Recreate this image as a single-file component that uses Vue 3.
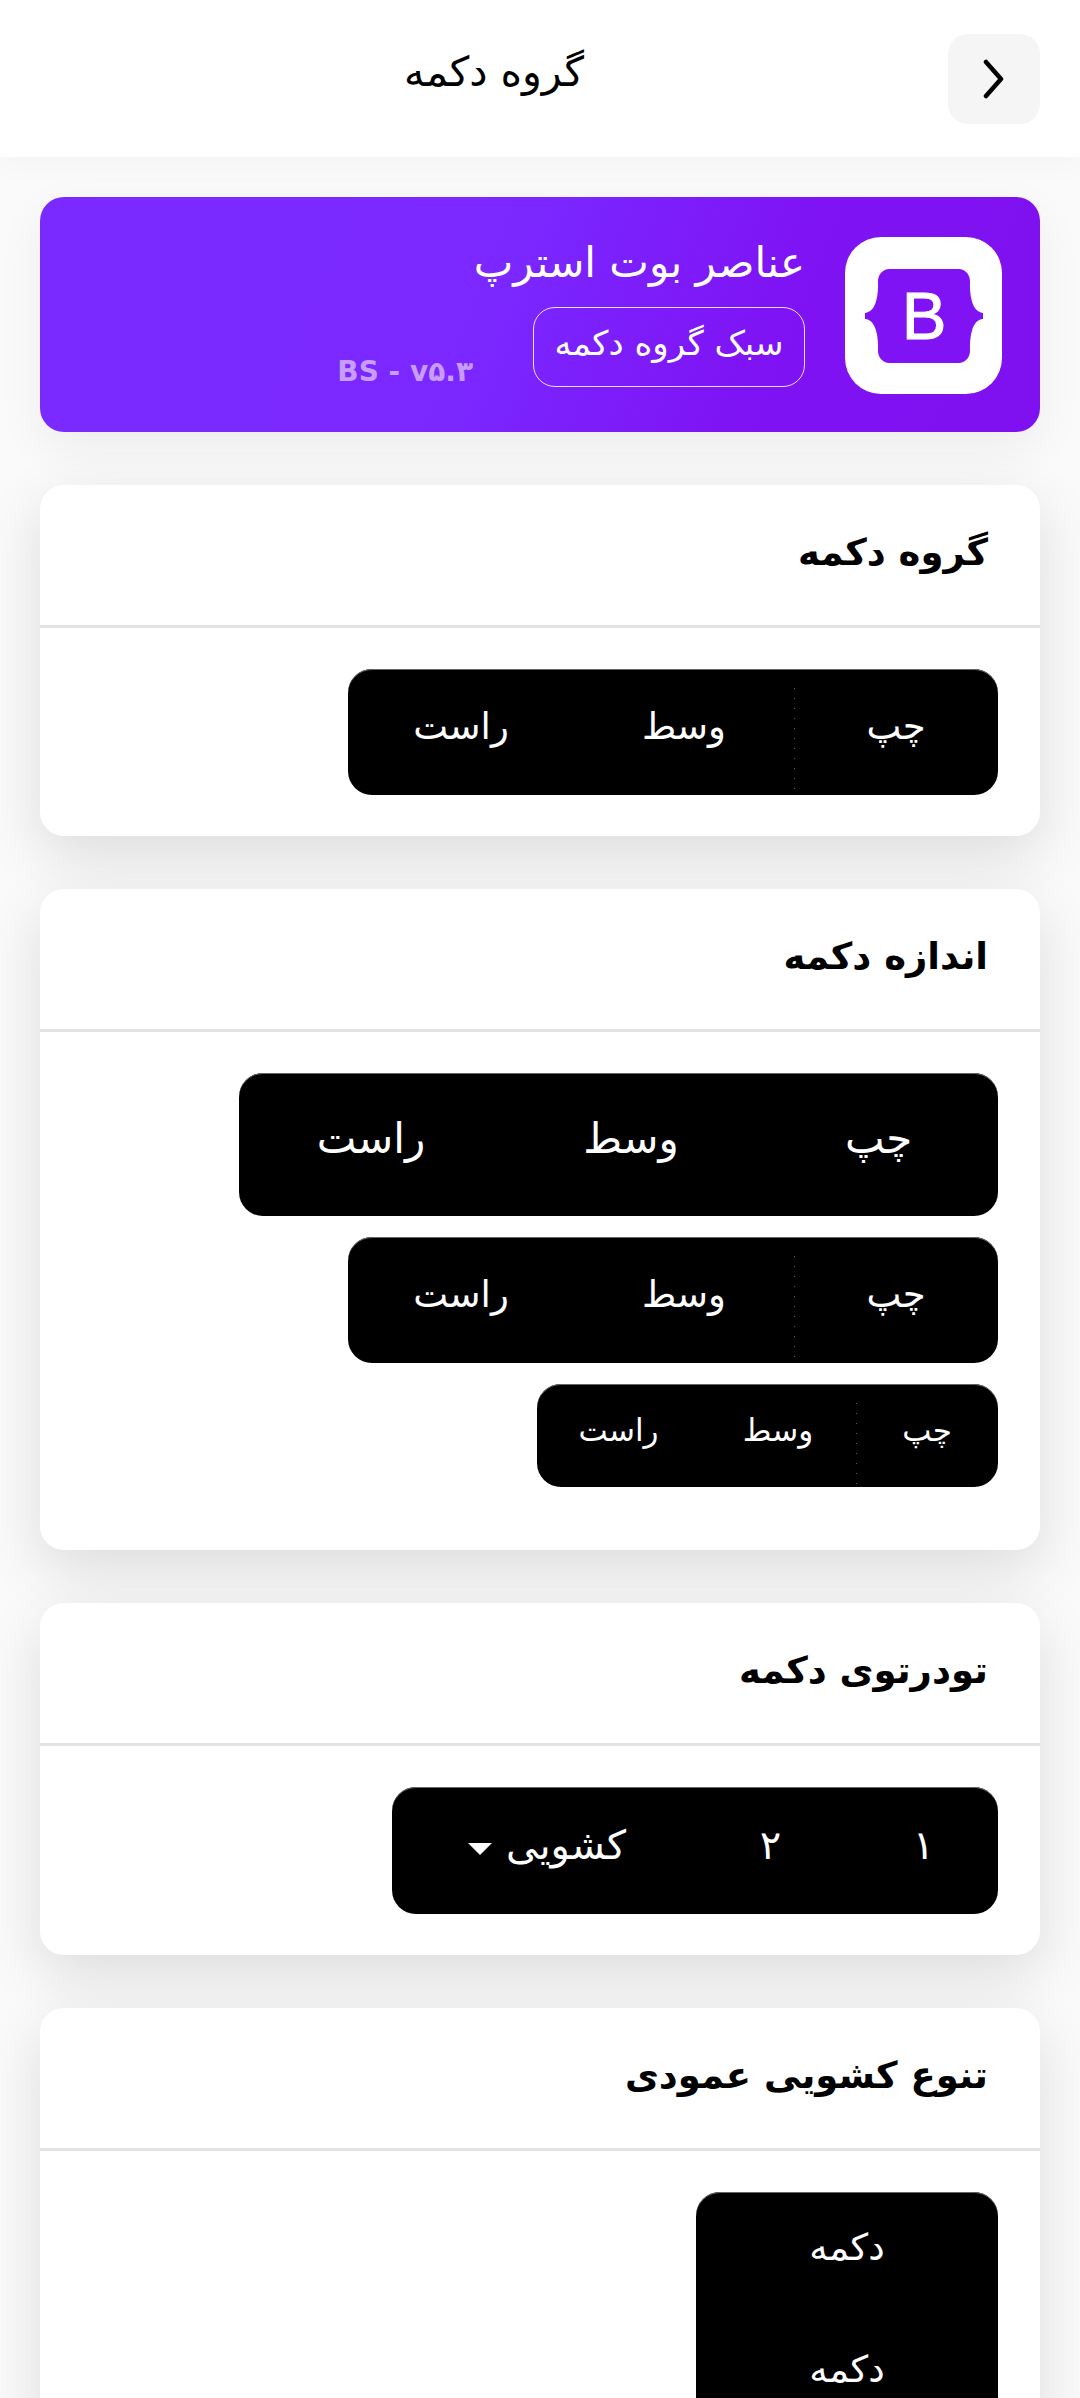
<template>
  <div class="page" dir="rtl">
    <!-- Header -->
    <header class="topbar">
      <button class="back-btn" aria-label="بازگشت">
        <svg width="24" height="40" viewBox="0 0 24 40" fill="none" stroke="#000" stroke-width="4.5" stroke-linecap="round" stroke-linejoin="round">
          <path d="M4 3l15 17L4 37"></path>
        </svg>
      </button>
      <h1 class="topbar-title">گروه دکمه</h1>
      <span></span>
    </header>

    <main class="content">
      <!-- Banner -->
      <section class="banner">
        <div class="banner-logo">
          <svg width="118" height="94" viewBox="0 0 118 94">
            <path fill="#7f13f3" d="M24.509 0c-6.733 0-11.715 5.893-11.492 12.284.214 6.14-.064 14.092-2.066 20.577C8.943 39.365 5.547 43.485 0 44.014v5.972c5.547.529 8.943 4.649 10.951 11.153 2.002 6.485 2.28 14.437 2.066 20.577C12.794 88.106 17.776 94 24.51 94H93.5c6.733 0 11.714-5.893 11.491-12.284-.214-6.14.064-14.092 2.066-20.577 2.009-6.504 5.396-10.624 10.943-11.153v-5.972c-5.547-.529-8.934-4.649-10.943-11.153-2.002-6.484-2.28-14.437-2.066-20.577C105.214 5.893 100.233 0 93.5 0H24.508z"></path>
            <text x="59" y="70" text-anchor="middle" class="logo-letter">B</text>
          </svg>
        </div>
        <div class="banner-text">
          <h2 class="banner-title">عناصر بوت استرپ</h2>
          <div class="banner-row">
            <span class="banner-chip">سبک گروه دکمه</span>
            <span class="banner-version">BS - v۵.۳</span>
          </div>
        </div>
      </section>

      <!-- Button group -->
      <section class="card">
        <h3 class="card-title">گروه دکمه</h3>
        <div class="card-body">
          <div class="btn-group md">
            <button v-for="label in labels" :key="label" class="btn">{{ label }}</button>
          </div>
        </div>
      </section>

      <!-- Button size -->
      <section class="card">
        <h3 class="card-title">اندازه دکمه</h3>
        <div class="card-body sizes">
          <div v-for="size in sizes" :key="size" class="btn-group" :class="size">
            <button v-for="label in labels" :key="label" class="btn">{{ label }}</button>
          </div>
        </div>
      </section>

      <!-- Nested -->
      <section class="card">
        <h3 class="card-title">تودرتوی دکمه</h3>
        <div class="card-body">
          <div class="btn-group nested">
            <button class="btn">۱</button>
            <button class="btn">۲</button>
            <button class="btn">
              کشویی
              <span class="caret"></span>
            </button>
          </div>
        </div>
      </section>

      <!-- Vertical -->
      <section class="card">
        <h3 class="card-title">تنوع کشویی عمودی</h3>
        <div class="card-body">
          <div class="btn-group vertical">
            <button class="btn">دکمه</button>
            <button class="btn">دکمه</button>
          </div>
        </div>
      </section>
    </main>
  </div>
</template>

<script setup>
const labels = ['چپ', 'وسط', 'راست']
const sizes = ['lg', 'md', 'sm']
</script>

<style>
html, body {
  margin: 0;
  height: 2398px;
  overflow: hidden;
}
</style>

<style scoped>
.page {
  min-height: 2398px;
  background: #fafafa;
  font-family: "DejaVu Sans", "Noto Sans", sans-serif;
  color: #000;
}

/* Header */
.topbar {
  height: 157px;
  box-sizing: border-box;
  padding: 34px 40px 33px;
  background: #fff;
  display: flex;
  justify-content: space-between;
  align-items: flex-start;
  box-shadow: 0 6px 30px rgba(0, 0, 0, 0.03);
}

.back-btn {
  width: 92px;
  height: 90px;
  border: none;
  border-radius: 20px;
  background: #f5f5f5;
  display: flex;
  align-items: center;
  justify-content: center;
  padding: 0;
}

.topbar-title {
  margin: 0;
  font-size: 41px;
  font-weight: 400;
  line-height: 76px;
}

.content {
  padding: 40px 40px 0;
  display: flex;
  flex-direction: column;
  gap: 53px;
}

/* Banner */
.banner {
  height: 235px;
  box-sizing: border-box;
  padding: 40px 38px;
  border-radius: 24px;
  background: linear-gradient(112deg, #7a2aff 0%, #7a28ff 45%, #7f13f3 72%, #7f10f0 100%);
  display: flex;
  gap: 40px;
  color: #fff;
  box-shadow: 0 16px 48px rgba(0, 0, 0, 0.06);
}

.banner-logo {
  width: 157px;
  height: 157px;
  border-radius: 36px;
  background: #fff;
  display: flex;
  align-items: center;
  justify-content: center;
  flex-shrink: 0;
}

.logo-letter {
  font-family: "Liberation Sans", sans-serif;
  font-size: 67px;
  fill: #fff;
  stroke: #fff;
  stroke-width: 1px;
}

.banner-text {
  display: flex;
  flex-direction: column;
  align-items: flex-start;
}

.banner-title {
  margin: 0 0 18px;
  font-size: 42px;
  font-weight: 400;
  line-height: 52px;
}

.banner-row {
  display: flex;
  align-items: flex-end;
}

.banner-chip {
  height: 80px;
  width: 272px;
  box-sizing: border-box;
  padding-bottom: 8px;
  border: 1.5px solid rgba(255, 255, 255, 0.85);
  border-radius: 22px;
  font-size: 34px;
  display: flex;
  align-items: center;
  justify-content: center;
}

.banner-version {
  margin-right: 60px;
  font-size: 28px;
  font-weight: 700;
  line-height: 30px;
  color: #c89dff;
}

/* Cards */
.card {
  background: #fff;
  border-radius: 24px;
  box-shadow: 0 20px 60px rgba(0, 0, 0, 0.12);
}

.card-title {
  margin: 0;
  height: 143px;
  box-sizing: border-box;
  padding: 0 52px 6px;
  border-bottom: 3px solid #e2e2e6;
  font-size: 37px;
  font-weight: 700;
  display: flex;
  align-items: center;
}

.card-body {
  padding: 41px 42px;
  display: flex;
  flex-direction: column;
  align-items: flex-start;
}

.card-body.sizes {
  gap: 21px;
  padding-bottom: 63px;
}

/* Button groups */
.btn-group {
  display: inline-flex;
  background: #000;
  border-radius: 24px;
  overflow: hidden;
  box-shadow: inset 0 1px 0 #666;
}

.btn {
  border: none;
  background-color: transparent;
  color: #fff;
  font-family: inherit;
  padding: 0 0 12px;
  display: flex;
  align-items: center;
  justify-content: center;
  gap: 14px;
}

.btn-group.md .btn {
  height: 126px;
  font-size: 37px;
}
.btn-group.md .btn:nth-child(1) { width: 204px; }
.btn-group.md .btn:nth-child(2) { width: 220px; }
.btn-group.md .btn:nth-child(3) { width: 226px; }

.btn-group.lg .btn {
  height: 143px;
  font-size: 42px;
}
.btn-group.lg .btn:nth-child(1) { width: 239px; }
.btn-group.lg .btn:nth-child(2) { width: 256px; }
.btn-group.lg .btn:nth-child(3) { width: 264px; }

.btn-group.sm .btn {
  height: 103px;
  font-size: 31px;
}
.btn-group.sm .btn:nth-child(1) { width: 142px; }
.btn-group.sm .btn:nth-child(2) { width: 156px; }
.btn-group.sm .btn:nth-child(3) { width: 163px; }

/* sparse dotted seam between the first two buttons */
.btn-group.md .btn:first-child,
.btn-group.sm .btn:first-child {
  background-image: repeating-linear-gradient(to bottom, #5c5c5c 0 1px, transparent 1px 10px);
  background-size: 1px calc(100% - 19px);
  background-position: left bottom;
  background-repeat: no-repeat;
}

.btn-group.nested .btn {
  height: 127px;
  font-size: 40px;
}
.btn-group.nested .btn:nth-child(1) { width: 149px; }
.btn-group.nested .btn:nth-child(2) { width: 157px; }
.btn-group.nested .btn:nth-child(3) {
  width: 300px;
  padding-left: 10px;
}

.caret {
  width: 0;
  height: 0;
  margin-top: 8px;
  border-top: 12px solid #fff;
  border-left: 12px solid transparent;
  border-right: 12px solid transparent;
}

.btn-group.vertical {
  flex-direction: column;
  width: 302px;
}

.btn-group.vertical .btn {
  height: 122px;
  font-size: 37px;
}
</style>
